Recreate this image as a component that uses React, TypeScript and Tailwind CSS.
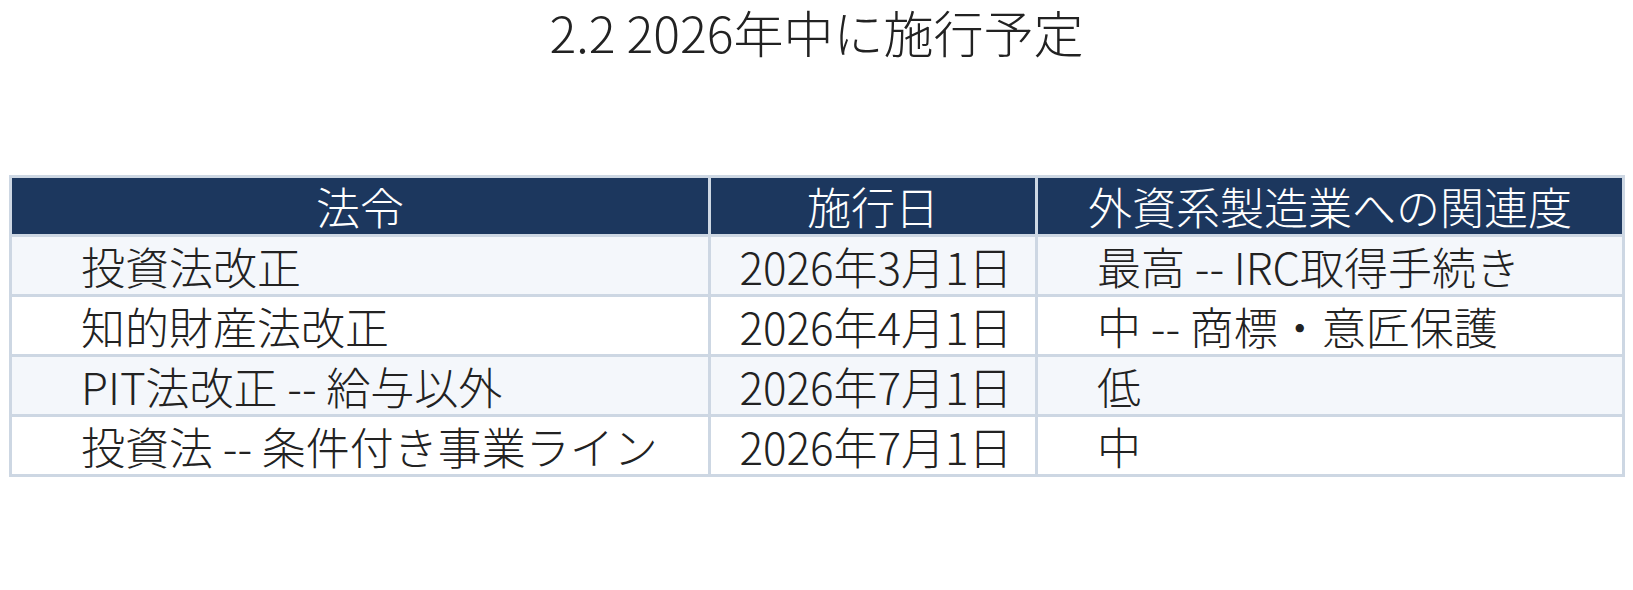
const rows = [
  { law: "投資法改正", date: "2026年3月1日", relevance: "最高 -- IRC取得手続き" },
  { law: "知的財産法改正", date: "2026年4月1日", relevance: "中 -- 商標・意匠保護" },
  { law: "PIT法改正 -- 給与以外", date: "2026年7月1日", relevance: "低" },
  { law: "投資法 -- 条件付き事業ライン", date: "2026年7月1日", relevance: "中" },
];

const font =
  "font-['Noto_Sans_CJK_JP_Light','Noto_Sans_CJK_JP_DemiLight','Noto_Sans_CJK_JP','Noto_Sans',sans-serif] font-light";

export default function App() {
  return (
    <div className={`h-[590px] w-[1633px] bg-white text-[#222] ${font}`}>
      <h1 className="text-center text-[50px] leading-[62px] font-light">
        2.2 2026年中に施行予定
      </h1>

      <div className="ml-[9px] mt-[113px] grid w-[1616px] grid-cols-[696px_324px_584px] gap-[3px] border-[3px] border-[#cdd7e3] bg-[#cdd7e3] text-[44px] leading-[52px]">
        <div className="flex h-[56px] items-center justify-center bg-[#1c375e] text-white">法令</div>
        <div className="flex h-[56px] items-center justify-center bg-[#1c375e] text-white">施行日</div>
        <div className="flex h-[56px] items-center justify-center bg-[#1c375e] text-white">
          外資系製造業への関連度
        </div>

        {rows.map((r, i) => {
          const bg = i % 2 === 0 ? "bg-[#f4f7fb]" : "bg-white";
          return [
            <div key={`${i}-a`} className={`flex h-[57px] items-center pl-[69px] ${bg}`}>
              {r.law}
            </div>,
            <div key={`${i}-b`} className={`flex h-[57px] items-center justify-center pl-[6px] ${bg}`}>
              {r.date}
            </div>,
            <div key={`${i}-c`} className={`flex h-[57px] items-center pl-[59px] ${bg}`}>
              {r.relevance}
            </div>,
          ];
        })}
      </div>
    </div>
  );
}
